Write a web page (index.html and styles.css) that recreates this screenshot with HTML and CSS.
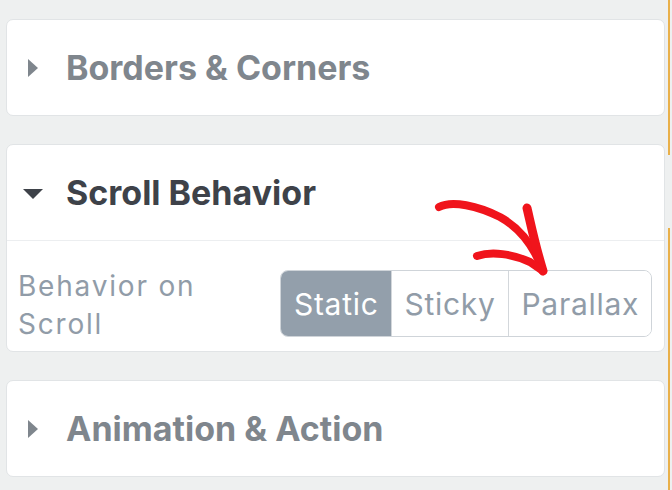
FILE: index.html
```html
<!DOCTYPE html>
<html lang="en">

<head>
    <meta charset="UTF-8">
    <meta name="viewport" content="width=device-width, initial-scale=1.0">
    <title>Section Settings</title>
    <link rel="stylesheet" href="styles.css">
</head>

<body>
    <div class="page">
        <div class="panel">
            <div class="card">
                <div class="card-header collapsed">
                    <span class="caret"><span class="tri-right"></span></span>
                    <span class="card-title">Borders &amp; Corners</span>
                </div>
            </div>

            <div class="card">
                <div class="card-header open">
                    <span class="caret"><span class="tri-down"></span></span>
                    <span class="card-title">Scroll Behavior</span>
                </div>
                <div class="card-body">
                    <div class="field-label">Behavior on<br>Scroll</div>
                    <div class="toggle-group">
                        <button class="toggle active">Static</button>
                        <button class="toggle">Sticky</button>
                        <button class="toggle">Parallax</button>
                    </div>
                </div>
            </div>

            <div class="card">
                <div class="card-header collapsed">
                    <span class="caret"><span class="tri-right"></span></span>
                    <span class="card-title">Animation &amp; Action</span>
                </div>
            </div>
        </div>

        <div class="edge">
            <div class="edge-top"></div>
            <div class="edge-bottom"></div>
        </div>

        <!-- hand drawn annotation pointing at Parallax -->
        <svg class="annotation" width="672" height="490" viewBox="0 0 672 490">
            <g fill="none" stroke="#f0141c" stroke-linecap="round" stroke-linejoin="round">
                <path d="M439 207 C 452 200, 478 206, 500 217 C 520 228, 534 246, 543 271" stroke-width="8" />
                <path d="M527 208 C 531 225, 535 245, 543 271" stroke-width="9" />
                <path d="M477 256 C 492 251, 512 254, 530 262 L 543 271" stroke-width="8" />
            </g>
        </svg>
    </div>
</body>

</html>
```

FILE: styles.css
```css
body {
    margin: 0;
    padding: 0;
    background: #eef0f0;
    font-family: Inter, Roboto, "Liberation Sans", Arial, sans-serif;
}

.page {
    position: relative;
    display: flex;
    width: 672px;
    height: 490px;
    overflow: hidden;
}

.panel {
    display: flex;
    flex-direction: column;
    gap: 28px;
    width: 659px;
    padding: 19px 0 0 6px;
}

.card {
    background-color: #ffffff;
    border: 1px solid #e1e4e6;
    border-radius: 7px;
}

.card-header {
    display: flex;
    align-items: center;
    height: 95px;
    padding-left: 16px;
}

.caret {
    display: flex;
    align-items: center;
    width: 43px;
}

.tri-right {
    width: 0;
    height: 0;
    margin-left: 5px;
    border-top: 9px solid transparent;
    border-bottom: 9px solid transparent;
    border-left: 10px solid #7f868d;
}

.tri-down {
    width: 0;
    height: 0;
    margin-top: 2px;
    border-left: 10px solid transparent;
    border-right: 10px solid transparent;
    border-top: 10px solid #3e4249;
}

.card-title {
    font-size: 34px;
    font-weight: bold;
    color: #7f868d;
}

.open .card-title {
    color: #3e4249;
}

.card-body {
    display: flex;
    align-items: flex-start;
    justify-content: space-between;
    height: 111px;
    padding: 29px 12px 0 11px;
    box-sizing: border-box;
    border-top: 1px solid #eceef0;
}

.field-label {
    font-size: 28px;
    line-height: 38px;
    letter-spacing: 1.8px;
    color: #919ca8;
    margin-top: -3px;
}

.toggle-group {
    display: flex;
    height: 67px;
    border: 1px solid #cfd4d9;
    border-radius: 8px;
    overflow: hidden;
    box-sizing: border-box;
}

.toggle {
    font-family: inherit;
    font-size: 30px;
    letter-spacing: 0.7px;
    color: #919ca8;
    background: #ffffff;
    border: none;
    border-left: 1px solid #d3d7db;
    padding: 0 12px 0 13px;
    margin: 0;
}

.toggle:first-child {
    border-left: none;
}

.toggle.active {
    background-color: #939fab;
    color: #ffffff;
}

.edge {
    display: flex;
    flex-direction: column;
    justify-content: space-between;
    width: 2px;
    margin-left: 3px;
}

.edge-top {
    height: 155px;
    background: #e9b04a;
}

.edge-bottom {
    height: 262px;
    background: #e9b04a;
}

.annotation {
    position: absolute;
    top: 0;
    left: 0;
    pointer-events: none;
}
```
